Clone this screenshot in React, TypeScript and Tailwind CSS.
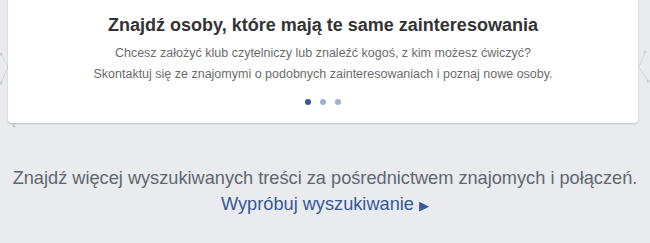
import React from "react";

export default function App() {
  return (
    <div
      className="relative h-[243px] w-[650px] overflow-hidden bg-[#e9ebee]"
      style={{ fontFamily: '"Liberation Sans", Arial, sans-serif' }}
    >
      <svg className="absolute left-0 top-0" width="650" height="243">
        <g stroke="#d3d6db" strokeWidth="1" fill="none">
          <line x1="1" y1="54" x2="8" y2="67" />
          <line x1="8" y1="67" x2="1" y2="83" />
          <line x1="645" y1="52" x2="639" y2="67" />
          <line x1="639" y1="67" x2="648" y2="81" />
        </g>
        <g fill="#c9ccd1">
          <circle cx="1" cy="54" r="1.5" />
          <circle cx="1" cy="83" r="1.5" />
          <circle cx="14" cy="126" r="1.5" />
          <circle cx="645" cy="52" r="1.5" />
          <circle cx="648" cy="81" r="1.5" />
        </g>
      </svg>
      <div className="relative mx-[8px] -mt-[10px] h-[133px] w-[630px] rounded-[4px] bg-white shadow-[0_1px_2px_rgba(0,0,0,0.2)]">
        <div className="flex flex-col items-center pt-[23px]">
          <div className="text-[18px] font-bold leading-[24px] text-[#333333]">
            Znajdź osoby, które mają te same zainteresowania
          </div>
          <div className="mt-[6px] text-center text-[12.5px] leading-[21px] text-[#6b6b6b]">
            <div>Chcesz założyć klub czytelniczy lub znaleźć kogoś, z kim możesz ćwiczyć?</div>
            <div>Skontaktuj się ze znajomymi o podobnych zainteresowaniach i poznaj nowe osoby.</div>
          </div>
          <div className="mt-[14px] flex items-center gap-[9px]">
            <span className="h-[6px] w-[6px] rounded-full bg-[#385898]" />
            <span className="h-[6px] w-[6px] rounded-full bg-[#9cb0d3]" />
            <span className="h-[6px] w-[6px] rounded-full bg-[#9cb0d3]" />
          </div>
        </div>
      </div>
      <div className="mt-[42px] flex flex-col items-center text-[18.2px] leading-[26px]">
        <div className="text-[#606770]">
          Znajdź więcej wyszukiwanych treści za pośrednictwem znajomych i połączeń.
        </div>
        <div className="text-[#365899]">
          Wypróbuj wyszukiwanie <span className="text-[13px]">▶</span>
        </div>
      </div>
    </div>
  );
}
